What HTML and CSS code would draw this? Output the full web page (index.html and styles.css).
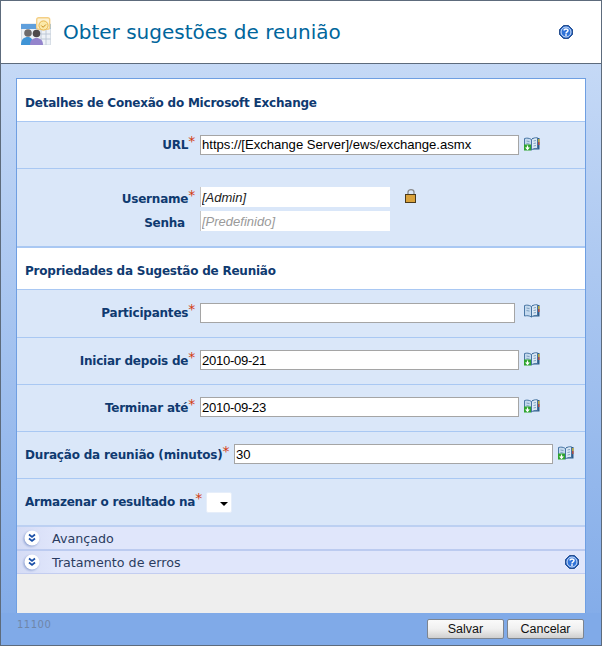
FILE: index.html
```html
<!DOCTYPE html>
<html lang="pt">
<head>
<meta charset="utf-8">
<title>Obter sugestões de reunião</title>
<link rel="stylesheet" href="styles.css">
</head>
<body>
<svg class="defs" width="0" height="0" aria-hidden="true">
  <defs>
    <g id="book-open">
      <path d="M8 1 H15.5 V12.5 H8Z" fill="#2f5c88"/>
      <path d="M14.2 2h1.3v3h-1.3z" fill="#d9b62c"/>
      <path d="M14.2 5h1.3v3h-1.3z" fill="#c84a3a"/>
      <path d="M0.5 1.5 C3 .8 5 1 7.5 2.5 V13 C5 11.5 3 11.5 .5 12Z" fill="#c4d9ee" stroke="#3c6c9c" stroke-width=".9"/>
      <path d="M7.5 2.5 C9 1 11 .5 13.5 .8 V11.5 C11 11.2 9 11.6 7.5 13Z" fill="#dbe9f6" stroke="#3c6c9c" stroke-width=".9"/>
      <path d="M2.5 4 L5.5 4.6 M2.5 6.5 L5.5 7.1 M9.5 4 L12 3.5 M9.5 6.5 L12 6 M9.5 9 L12 8.5" stroke="#6a90b4" stroke-width=".8"/>
    </g>
    <g id="book">
      <use href="#book-open"/>
      <rect x="0" y="7.5" width="7" height="6" fill="#2ea52e"/>
      <path d="M3.5 8.5 V12 M1.7 10.4 L3.5 12.4 L5.3 10.4" stroke="#fff" stroke-width="1.2" fill="none"/>
    </g>
    <g id="help">
      <path d="M4.5 .5 H9.5 L13.5 4.5 V9.5 L9.5 13.5 H4.5 L.5 9.5 V4.5Z" fill="#1f5dbd" stroke="#274f8e"/>
      <circle cx="7" cy="7" r="5" fill="#2f72d8" stroke="#dbe8fc" stroke-width="1"/>
      <path d="M5.1 5.5 C5.1 3.5 9 3.5 9 5.5 C9 6.9 7 6.7 7 8.4" fill="none" stroke="#fff" stroke-width="1.5"/>
      <rect x="6.2" y="9.2" width="1.6" height="1.6" fill="#fff"/>
    </g>
    <g id="chev">
      <circle cx="8" cy="8" r="7.5" fill="#fff"/>
      <path d="M5 4.5 L8 7 L11 4.5 M5 8.5 L8 11 L11 8.5" fill="none" stroke="#1a4fa8" stroke-width="1.7"/>
    </g>
  </defs>
</svg>
<div class="window">
  <header class="header">
    <svg class="logo" width="30" height="28" viewBox="0 0 30 28" aria-hidden="true">
      <rect x=".3" y="7" width="29" height="21" fill="#eef2f7" stroke="#c0cbd8" stroke-width=".6"/>
      <rect x="0" y="7" width="29.5" height="5" fill="#5f9fdc"/>
      <path d="M20 12v16M25 12v16M20 17h9.5M20 22h9.5" stroke="#b9c4d2" stroke-width=".9"/>
      <rect x="15.7" y=".7" width="13" height="11.5" rx="2" fill="#fdf3d6" stroke="#f4cf85" stroke-width="1.4"/>
      <circle cx="22.5" cy="8.5" r="4.6" fill="#fbe9a8" stroke="#e8b64d"/>
      <path d="M20.3 8.5 l1.8 1.8 l2.8-2.8" fill="none" stroke="#c98a1d" stroke-width="1"/>
      <circle cx="7" cy="16" r="3.8" fill="#6d6a6c"/>
      <path d="M0 28 C0 22 3 20 7 20 C10 20 12 22 12 28Z" fill="#3f94d6"/>
      <circle cx="15.5" cy="16.5" r="3.8" fill="#4f4a4c"/>
      <path d="M9 28 C9 23 12 21 15.5 21 C19 21 22 23 22 28Z" fill="#9484cc"/>
    </svg>
    <h1 class="title">Obter sugestões de reunião</h1>
    <svg class="help-top" width="14" height="14" viewBox="0 0 14 14" aria-label="Ajuda"><use href="#help"/></svg>
  </header>
  <main class="body">
    <div class="panel">
      <h2 class="section">Detalhes de Conexão do Microsoft Exchange</h2>
      <div class="row row-url">
        <label class="label">URL<span class="req">*</span></label>
        <input class="field" type="text" value="https://[Exchange Server]/ews/exchange.asmx">
        <svg class="book" width="16" height="14" viewBox="0 0 16 14" aria-hidden="true"><use href="#book"/></svg>
      </div>
      <div class="creds">
        <div class="cred-line">
          <label class="label">Username<span class="req">*</span></label>
          <input class="field plain em" type="text" value="[Admin]">
          <svg class="lock" width="12" height="15" viewBox="0 0 12 15" aria-hidden="true">
            <path d="M3 7 V4 C3 .8 9 .8 9 4 V7" fill="none" stroke="#8a8a8a" stroke-width="1.3"/>
            <rect x=".5" y="6.5" width="10" height="8" fill="#d9a23c" stroke="#4a3a1c"/>
          </svg>
        </div>
        <div class="cred-line">
          <label class="label label-plain">Senha</label>
          <input class="field plain em muted" type="text" value="[Predefinido]">
        </div>
      </div>
      <h2 class="section section-second">Propriedades da Sugestão de Reunião</h2>
      <div class="row row-tall">
        <label class="label">Participantes<span class="req">*</span></label>
        <input class="field field-short" type="text" value="">
        <svg class="book" width="16" height="14" viewBox="0 0 16 14" aria-hidden="true"><use href="#book-open"/></svg>
      </div>
      <div class="row">
        <label class="label">Iniciar depois de<span class="req">*</span></label>
        <input class="field date" type="text" value="2010-09-21">
        <svg class="book" width="16" height="14" viewBox="0 0 16 14" aria-hidden="true"><use href="#book"/></svg>
      </div>
      <div class="row">
        <label class="label">Terminar até<span class="req">*</span></label>
        <input class="field date" type="text" value="2010-09-23">
        <svg class="book" width="16" height="14" viewBox="0 0 16 14" aria-hidden="true"><use href="#book"/></svg>
      </div>
      <div class="row">
        <label class="label label-wide">Duração da reunião (minutos)<span class="req">*</span></label>
        <input class="field" type="text" value="30">
        <svg class="book" width="16" height="14" viewBox="0 0 16 14" aria-hidden="true"><use href="#book"/></svg>
      </div>
      <div class="row row-last">
        <label class="label label-auto">Armazenar o resultado na<span class="req">*</span></label>
        <span class="select"><span class="caret"></span></span>
      </div>
      <div class="acc acc-first">
        <svg class="chev" width="16" height="16" viewBox="0 0 16 16" aria-hidden="true"><use href="#chev"/></svg>
        <span>Avançado</span>
      </div>
      <div class="acc">
        <svg class="chev" width="16" height="16" viewBox="0 0 16 16" aria-hidden="true"><use href="#chev"/></svg>
        <span>Tratamento de erros</span>
        <svg class="help-acc" width="14" height="14" viewBox="0 0 14 14" aria-label="Ajuda"><use href="#help"/></svg>
      </div>
      <div class="spacer"></div>
    </div>
    <footer class="footer">
      <span class="code">11100</span>
      <div class="buttons">
        <button class="btn" type="button">Salvar</button>
        <button class="btn" type="button">Cancelar</button>
      </div>
    </footer>
  </main>
</div>
</body>
</html>
```

FILE: styles.css
```css
* { box-sizing: border-box; }
html, body { margin: 0; padding: 0; }
body { width: 602px; height: 646px; overflow: hidden; font-family: "DejaVu Sans", Verdana, sans-serif; }
.defs { position: absolute; }
.window { width: 602px; height: 646px; border: 1px solid #5d6b7c; display: flex; flex-direction: column; }
.header { height: 63px; flex: none; background: #fff; border-bottom: 1px solid #5d6b7c; display: flex; align-items: center; padding: 0 28px 0 20px; }
.logo { flex: none; margin-top: -2px; }
.title { margin: 0 0 0 12px; font-size: 20px; font-weight: 400; color: #00669c; flex: 1; }
.help-top { flex: none; }
.body { flex: 1; display: flex; flex-direction: column; padding: 14px 15px 0; background: linear-gradient(#c5d9f6, #80aae8 100%); }
.panel { height: 535px; flex: none; border: 1px solid #6f9fe2; border-bottom-width: 0; background: #eee; display: flex; flex-direction: column; }
.section { margin: 0; height: 43px; flex: none; background: #fff; border-bottom: 1px solid #a9c8f3; padding: 0 8px; font-size: 12px; letter-spacing: -.22px; font-weight: 700; line-height: 49px; color: #0f3a70; }
.section-second { height: 42px; line-height: 47px; }
.row { height: 47px; flex: none; display: flex; align-items: center; background: #dae7f9; border-bottom: 1px solid #a9c8f3; padding: 0 0 2px 8px; }
.row-url { padding-bottom: 0; }
.row-url .label { padding-top: 0; margin-top: -1px; }
.row-url .field { padding-bottom: 2px; }
.row-tall { height: 48px; }
.row-last { border-bottom: 2px solid #bcd0f2; height: 48px; padding-bottom: 0; }
.row-last .label { padding-top: 0; margin-top: -1px; }
.creds { height: 79px; flex: none; display: flex; flex-direction: column; justify-content: center; gap: 4px; background: #dae7f9; border-bottom: 2px solid #a9c8f3; padding-left: 8px; padding-top: 3px; }
.cred-line { display: flex; align-items: center; height: 20px; }
.cred-line .label { padding-top: 3px; }
.label { width: 175px; flex: none; font-size: 12px; letter-spacing: -.22px; font-weight: 700; color: #0f3a70; text-align: right; padding-right: 5px; padding-top: 1px; white-space: nowrap; }
.cred-line .label-plain { padding-right: 15px; }
.label-wide { width: 209px; padding-right: 0; text-align: left; letter-spacing: -.18px; }
.label-auto { width: auto; padding-right: 0; }
.req { color: #d33a10; font-weight: 400; font-size: 14px; position: relative; top: -3px; line-height: 0; }
.field { width: 319px; height: 20px; border: 1px solid #a5a5a5; background: #fff; padding: 0 0 0 1px; font: 13.1px "Liberation Sans", Arial, sans-serif; color: #000; flex: none; outline: 0; }
.date { letter-spacing: -.3px; }
.field-short { width: 315px; }
.plain { width: 190px; height: 20px; border-width: 0 0 0 1px; border-color: #c5c5c5; }
.em { font-style: italic; font-size: 13px; color: #222; }
.muted { color: #9a9a9a; }
.book { flex: none; margin: -3px 0 0 5px; }
.field-short + .book { margin-left: 9px; }
.lock { flex: none; margin: -3px 0 0 15px; }
.select { width: 26px; height: 21px; margin: 1px 0 0 4px; background: #fff; border: 1px solid #e6eefa; border-radius: 2px; position: relative; display: block; }
.caret { position: absolute; left: 13px; top: 9px; border: 4px solid transparent; border-top-color: #000; border-bottom-width: 0; }
.acc { height: 23px; flex: none; display: flex; align-items: center; background: linear-gradient(90deg, #d5dcf5, #e0e6fb 40px); border-bottom: 1px solid #c3cdf0; padding-left: 7px; font-size: 12.7px; color: #2b3c60; }
.acc-first { height: 24px; border-bottom: 2px solid #bccbf0; }
.acc > span { margin-left: 12px; }
.chev { flex: none; filter: drop-shadow(-1px 1px 1px #8c9fd0); }
.help-acc { margin-left: auto; flex: none; }
.acc .help-acc { margin-right: 6px; }
.spacer { flex: 1; background: #eee; }
.footer { flex: 1; display: flex; justify-content: space-between; align-items: flex-start; background: #80aae8; margin: 0 -15px; padding: 6px 17px 0 16px; }
.code { font-size: 10px; letter-spacing: .5px; color: #6f86a8; }
.buttons { display: flex; gap: 3px; }
.btn { width: 77px; height: 20px; padding: 0; border: 1px solid #7d8590; border-radius: 2px; background: linear-gradient(#fafafa, #f0f0f0 50%, #cfcfcf); font: 12.5px "Liberation Sans", Arial, sans-serif; color: #111; }
```
